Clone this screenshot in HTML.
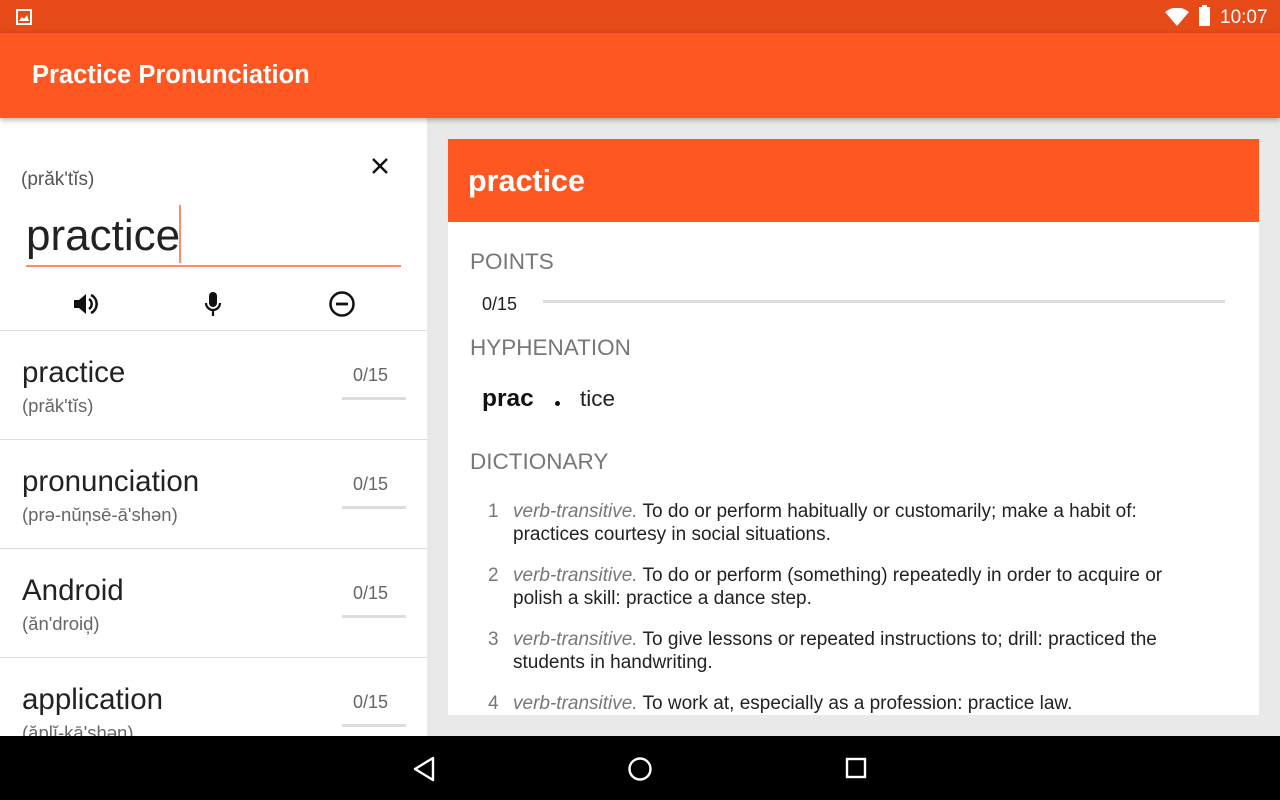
<!DOCTYPE html>
<html><head><style>
*{margin:0;padding:0;box-sizing:border-box}
body{width:1280px;height:800px;overflow:hidden;font-family:"Liberation Sans",sans-serif;background:#e9e9e9;position:relative}
.sb{position:absolute;top:0;left:0;width:1280px;height:33px;background:#e64a19;color:#fff}
.ab{position:absolute;top:33px;left:0;width:1280px;height:85px;background:#ff5722;box-shadow:0 2px 5px rgba(0,0,0,.3);z-index:2}
.ab h1{position:absolute;left:32px;top:28px;font-size:25.5px;font-weight:bold;color:#fff}
.left{position:absolute;left:0;top:118px;width:427px;height:618px;background:#fff;overflow:hidden}
.nav{position:absolute;left:0;top:736px;width:1280px;height:64px;background:#000}
.abs{position:absolute}
.item{position:absolute;left:0;width:427px;height:109px;border-top:1px solid #ddd}
.item .w{position:absolute;left:22px;top:25px;font-size:29.5px;color:#222}
.item .p{position:absolute;left:22px;top:64px;font-size:18.5px;color:#666}
.item .s{position:absolute;left:353px;top:34px;font-size:18px;color:#666}
.item .b{position:absolute;left:342px;top:66px;width:64px;height:3px;background:#ddd}
.card{position:absolute;left:448px;top:139px;width:811px;height:576px;background:#fff}
.ch{height:83px;background:#ff5722;color:#fff;font-size:30.5px;font-weight:bold;padding:25px 0 0 20px}
.lab{position:absolute;left:22px;font-size:22.5px;color:#777}
.def{position:absolute;left:40px;font-size:19px;color:#222;line-height:23px;width:720px}
.def .n{position:absolute;left:0;color:#777}
.def .t{margin-left:25px;display:block;width:662px}
.def i{color:#777}
</style></head><body>
<div class="sb">
<svg class="abs" style="left:16px;top:9px" width="16" height="16" viewBox="0 0 16 16"><rect x="1" y="1" width="14" height="14" fill="none" stroke="#fff" stroke-width="2"/><path d="M3 12l3-4 2 2 3-4 2 6z" fill="#fff"/></svg>
<svg class="abs" style="left:1165px;top:8px" width="24" height="18" viewBox="0 0 24 18"><path d="M0 4Q12-5 24 4L12 18z" fill="#fff"/></svg>
<div class="abs" style="left:1199px;top:7px;width:11px;height:19px;background:#fff"></div>
<div class="abs" style="left:1202px;top:5px;width:5px;height:3px;background:#fff"></div>
<div class="abs" style="left:1220px;top:7px;font-size:19px">10:07</div>
</div>
<div class="ab"><h1>Practice Pronunciation</h1></div>
<div class="left">
<div class="abs" style="left:21px;top:51px;font-size:19px;color:#555">(prăk'tĭs)</div>
<svg class="abs" style="left:371px;top:39px" width="18" height="18" viewBox="0 0 18 18"><path d="M2 2L16 16M16 2L2 16" stroke="#111" stroke-width="2.4"/></svg>
<div class="abs" style="left:26px;top:93px;font-size:44px;color:#222">practice</div>
<div class="abs" style="left:179px;top:87px;width:2px;height:58px;background:#ff8a65"></div>
<div class="abs" style="left:26px;top:147px;width:375px;height:2px;background:#ff8a65"></div>
<svg class="abs" style="left:73px;top:174px" width="26" height="24" viewBox="0 0 26 24"><path d="M1 8h5l7-6v20l-7-6H1z" fill="#111"/><path d="M16 7a6 6 0 0 1 0 10" stroke="#111" stroke-width="2.5" fill="none"/><path d="M18 3a10 10 0 0 1 0 18" stroke="#111" stroke-width="2.5" fill="none"/></svg>
<svg class="abs" style="left:203px;top:173px" width="20" height="26" viewBox="0 0 20 26"><rect x="6" y="1" width="8" height="15" rx="4" fill="#111"/><path d="M3 12a7 7 0 0 0 14 0M10 19v6" stroke="#111" stroke-width="2.2" fill="none"/></svg>
<svg class="abs" style="left:328px;top:172px" width="28" height="28" viewBox="0 0 28 28"><circle cx="14" cy="14" r="11.5" stroke="#111" stroke-width="2.5" fill="none"/><path d="M8 14h12" stroke="#111" stroke-width="2.8"/></svg>
<div class="item" style="top:212px"><div class="w">practice</div><div class="p">(prăk'tĭs)</div><div class="s">0/15</div><div class="b"></div></div>
<div class="item" style="top:321px"><div class="w">pronunciation</div><div class="p">(prə-nŭn̦sē-ā'shən)</div><div class="s">0/15</div><div class="b"></div></div>
<div class="item" style="top:430px"><div class="w">Android</div><div class="p">(ăn'droid̦)</div><div class="s">0/15</div><div class="b"></div></div>
<div class="item" style="top:539px"><div class="w">application</div><div class="p">(ăp̦lĭ-kā'shən)</div><div class="s">0/15</div><div class="b"></div></div>
</div>
<div class="card">
<div class="ch">practice</div>
<div class="lab" style="top:110px">POINTS</div>
<div class="abs" style="left:34px;top:155px;font-size:18px;color:#222">0/15</div>
<div class="abs" style="left:95px;top:161px;width:682px;height:3px;background:#ddd"></div>
<div class="lab" style="top:196px">HYPHENATION</div>
<div class="abs" style="left:34px;top:246px;font-size:24.5px;font-weight:bold;color:#111">prac</div>
<div class="abs" style="left:107px;top:262px;width:5px;height:5px;border-radius:50%;background:#111"></div>
<div class="abs" style="left:132px;top:247px;font-size:22.5px;color:#222">tice</div>
<div class="lab" style="top:310px">DICTIONARY</div>
<div class="def" style="top:361px"><span class="n">1</span><span class="t"><i>verb-transitive.</i> To do or perform habitually or customarily; make a habit of: practices courtesy in social situations.</span></div>
<div class="def" style="top:425px"><span class="n">2</span><span class="t"><i>verb-transitive.</i> To do or perform (something) repeatedly in order to acquire or polish a skill: practice a dance step.</span></div>
<div class="def" style="top:489px"><span class="n">3</span><span class="t"><i>verb-transitive.</i> To give lessons or repeated instructions to; drill: practiced the students in handwriting.</span></div>
<div class="def" style="top:553px"><span class="n">4</span><span class="t"><i>verb-transitive.</i> To work at, especially as a profession: practice law.</span></div>
</div>
<div class="nav">
<svg class="abs" style="left:412px;top:20px" width="24" height="26" viewBox="0 0 24 26"><path d="M21 2L3 13l18 11z" fill="none" stroke="#fff" stroke-width="2.4" stroke-linejoin="round"/></svg>
<svg class="abs" style="left:627px;top:20px" width="26" height="26" viewBox="0 0 26 26"><circle cx="13" cy="13" r="10.5" fill="none" stroke="#fff" stroke-width="2.4"/></svg>
<svg class="abs" style="left:845px;top:21px" width="22" height="22" viewBox="0 0 22 22"><rect x="2" y="2" width="18" height="18" fill="none" stroke="#fff" stroke-width="2.4"/></svg>
</div>
</body></html>
